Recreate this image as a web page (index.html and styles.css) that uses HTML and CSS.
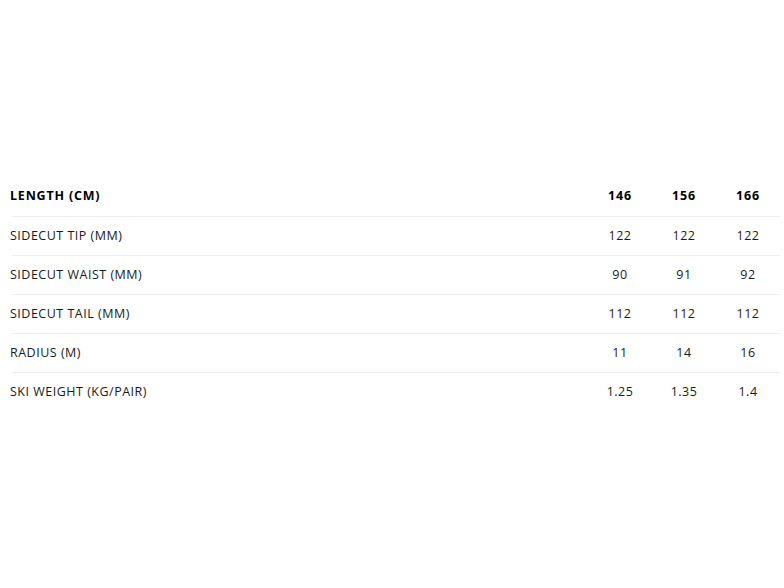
FILE: index.html
```html
<!DOCTYPE html>
<html>
<head>
<meta charset="utf-8">
<link rel="stylesheet" href="styles.css">
</head>
<body>
<div class="page">
  <table class="specs">
    <thead>
      <tr class="head"><th class="label">LENGTH (CM)</th><th>146</th><th>156</th><th>166</th></tr>
    </thead>
    <tbody>
      <tr><td class="label">SIDECUT TIP (MM)</td><td>122</td><td>122</td><td>122</td></tr>
      <tr><td class="label">SIDECUT WAIST (MM)</td><td>90</td><td>91</td><td>92</td></tr>
      <tr><td class="label">SIDECUT TAIL (MM)</td><td>112</td><td>112</td><td>112</td></tr>
      <tr><td class="label">RADIUS (M)</td><td>11</td><td>14</td><td>16</td></tr>
      <tr class="last"><td class="label">SKI WEIGHT (KG/PAIR)</td><td>1.25</td><td>1.35</td><td>1.4</td></tr>
    </tbody>
  </table>
</div>
</body>
</html>
```
FILE: styles.css
```css
html, body {
  margin: 0;
  padding: 0;
  background: #fff;
}
.page {
  padding: 176px 4px 0 12px;
  font-family: "Open Sans", "DejaVu Sans", sans-serif;
  color: #1a1a1a;
}
.specs {
  width: 768px;
  border-collapse: collapse;
  font-size: 12.5px;
}
.specs th, .specs td {
  padding: 0 0 2px 0;
  text-align: center;
  width: 64px;
  height: 36px;
  border-bottom: 1px solid #ececec;
  letter-spacing: 0.5px;
}
.specs .label {
  width: auto;
  text-align: left;
  text-indent: -2px;
}
.specs th {
  font-weight: 700;
  font-size: 12.5px;
  height: 38px;
  color: #000;
  letter-spacing: 0.8px;
}
.specs tr.last td {
  border-bottom: none;
}
```
